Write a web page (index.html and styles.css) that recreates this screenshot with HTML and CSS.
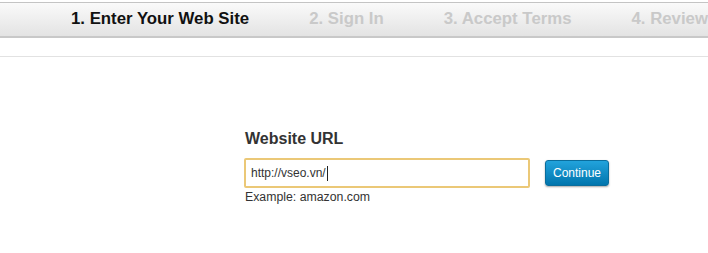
FILE: index.html
```html
<!DOCTYPE html>
<html>
<head>
<meta charset="utf-8">
<link rel="stylesheet" href="styles.css">
</head>
<body>
<div class="steps">
  <span class="step active">1. Enter Your Web Site</span>
  <span class="step">2. Sign In</span>
  <span class="step">3. Accept Terms</span>
  <span class="step">4. Review</span>
</div>
<div class="rule"></div>
<div class="form">
  <h2 class="label">Website URL</h2>
  <div class="row">
    <div class="input"><span>http://vseo.vn/</span><span class="caret"></span></div>
    <button class="btn">Continue</button>
  </div>
  <div class="hint">Example: amazon.com</div>
</div>
</body>
</html>
```
FILE: styles.css
```css
html, body { margin: 0; padding: 0; background: #fff; }
body { font-family: "Liberation Sans", Arial, sans-serif; width: 708px; height: 253px; overflow: hidden; }
.steps {
  margin-top: 2px;
  height: 33px;
  border-top: 1px solid #c4c4c4;
  border-bottom: 2px solid #c8c8c8;
  background: linear-gradient(#fafafa, #e3e3e3);
  display: flex;
  align-items: center;
  padding-left: 71px;
  gap: 60px;
  white-space: nowrap;
}
.step { font-weight: bold; font-size: 16.8px; color: #c9c9c9; padding-bottom: 1px; }
.step.active { color: #111; }
.rule { margin-top: 18px; border-top: 1px solid #e2e2e2; }
.form { padding-left: 245px; padding-top: 73px; }
.label { margin: 0; font-size: 16px; font-weight: bold; color: #333; line-height: 18px; }
.row { display: flex; align-items: center; gap: 15px; margin-top: 10px; margin-left: -1px; }
.input {
  box-sizing: border-box;
  width: 286px; height: 30px;
  border: 2px solid #ebc877;
  border-radius: 2px;
  display: flex; align-items: center;
  padding-left: 5px;
  font-size: 12px; color: #333;
}
.caret { display: inline-block; width: 1px; height: 15px; background: #222; margin-left: 1px; }
.btn {
  box-sizing: border-box;
  width: 64px; height: 26px;
  border: 1px solid #0a6d9c;
  border-radius: 3px;
  background: linear-gradient(#22a3dc, #0075ad);
  color: #fff;
  font-family: "Liberation Sans", Arial, sans-serif;
  font-size: 12px;
  padding: 0;
  box-shadow: 0 1px 2px rgba(0,0,0,0.35);
}
.hint { font-size: 12.3px; color: #333; margin-top: 2px; line-height: 14px; }
```
